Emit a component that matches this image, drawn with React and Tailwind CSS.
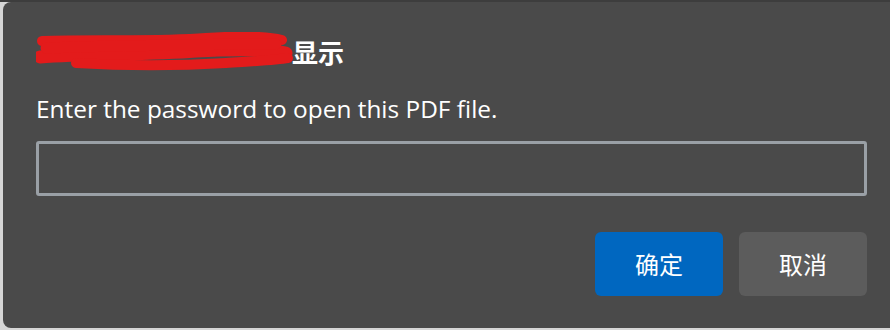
function Scribble() {
  return (
    <svg width="258" height="40" viewBox="0 0 258 40" className="shrink-0">
      <g stroke="#e31b1b" strokeLinecap="round" strokeLinejoin="round" fill="none">
        <path d="M6 9 C60 7 120 10 170 6 C200 4 230 4 246 8" strokeWidth="10" />
        <path d="M4 25 C50 21 110 23 160 19 C200 17 230 17 250 21" strokeWidth="13" />
        <path d="M40 31 C90 34 140 34 190 31 C220 29 240 28 252 26" strokeWidth="10" />
        <path d="M10 16 C80 14 150 12 240 12" strokeWidth="11" />
      </g>
    </svg>
  );
}

export default function App() {
  return (
    <div className="h-[330px] w-[890px] overflow-hidden bg-[#d6d6d6] pl-[3px] border-t-2 border-[#3d3d3d]">
      <div
        className="h-[326px] rounded-l-[8px] bg-[#4a4a4a] pl-[33px] pr-[20px] text-white"
        style={{ fontFamily: '"Open Sans", "Noto Sans CJK SC", sans-serif' }}
      >
        <div className="flex items-center pt-[30px] h-[70px]">
          <Scribble />
          <span className="-ml-[2px] text-[26px] font-bold leading-none" style={{ fontFamily: '"Noto Sans CJK SC", sans-serif' }}>显示</span>
        </div>
        <p className="mt-[22px] text-[24.4px] leading-[30px]">Enter the password to open this PDF file.</p>
        <div className="mt-[17px] h-[55px] w-[831px] rounded-[3px] border-[3px] border-[#9aa0a6]" />
        <div className="mt-[36px] flex w-[831px] justify-end gap-[16px]">
          <button className="h-[64px] w-[128px] rounded-[6px] bg-[#0067c0] text-[24px] text-white" style={{ fontFamily: '"Noto Sans CJK SC", sans-serif' }}>确定</button>
          <button className="h-[64px] w-[128px] rounded-[6px] bg-[#5c5c5c] text-[24px] text-white" style={{ fontFamily: '"Noto Sans CJK SC", sans-serif' }}>取消</button>
        </div>
      </div>
    </div>
  );
}
